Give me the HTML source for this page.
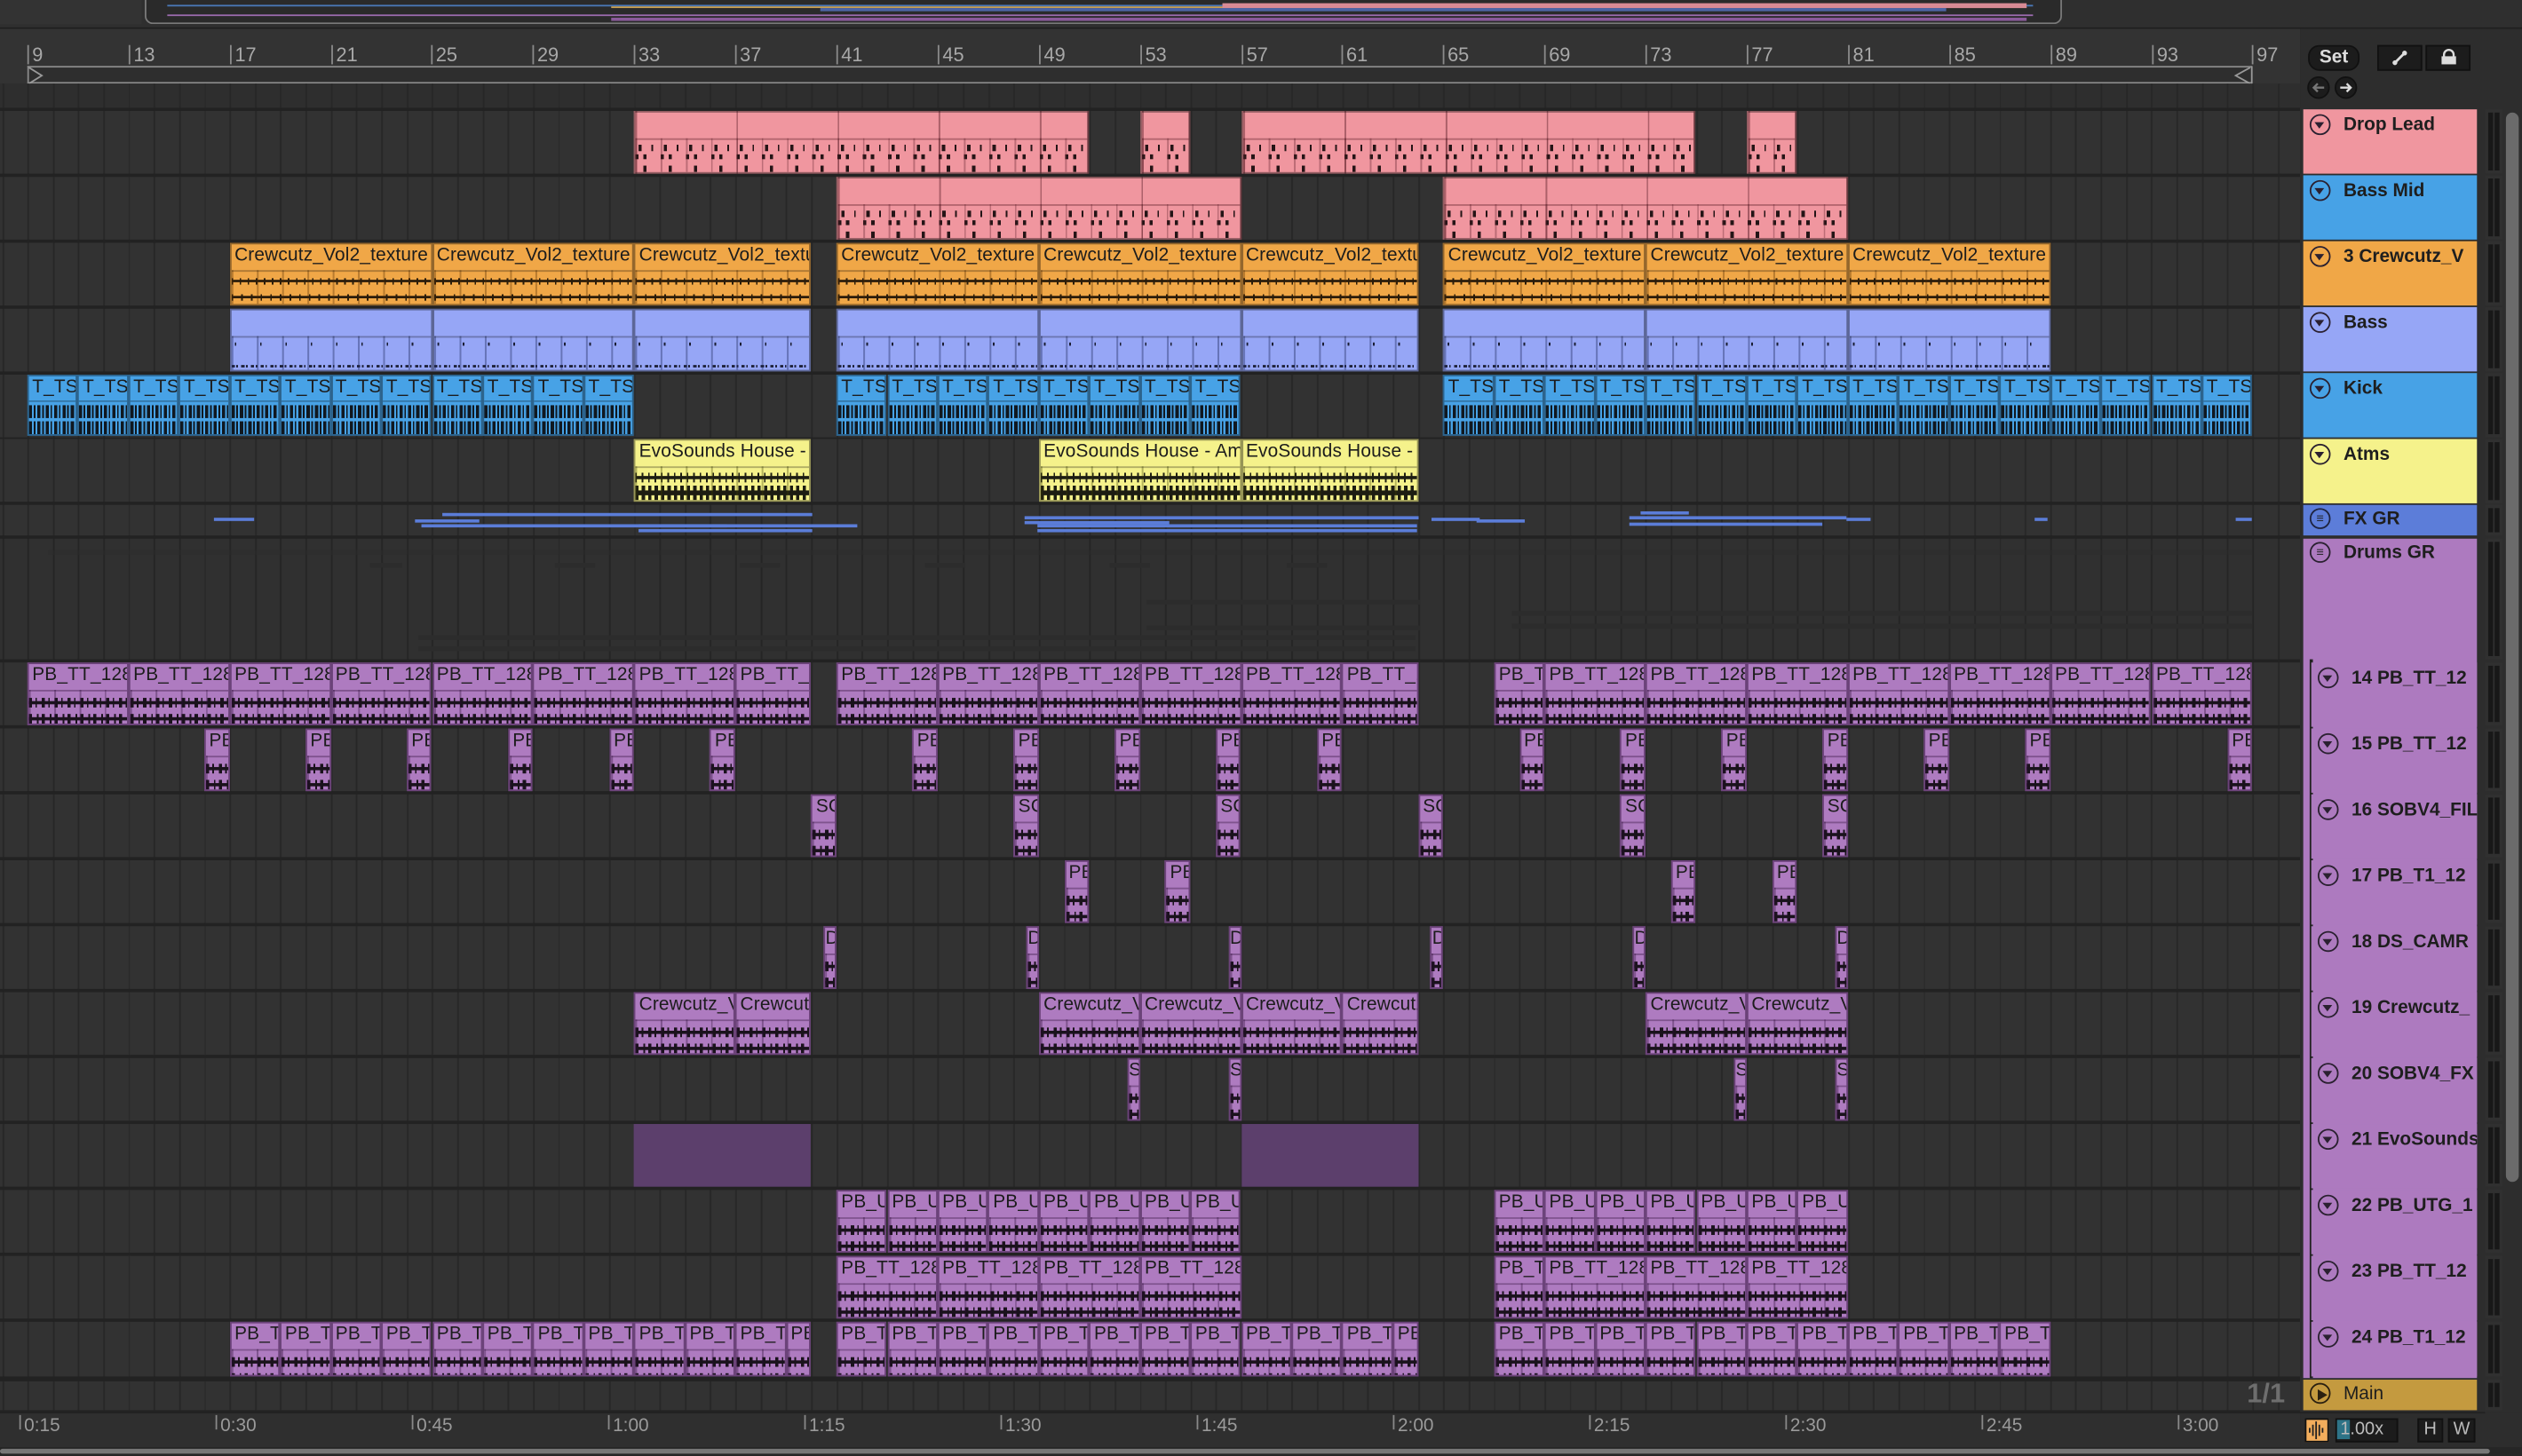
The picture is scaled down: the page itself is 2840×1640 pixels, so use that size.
<!DOCTYPE html>
<html><head><meta charset="utf-8"><style>
html,body{margin:0;padding:0;width:2840px;height:1640px;overflow:hidden;background:#2b2b2b}
.w{position:absolute;left:0;top:0;width:1568px;height:905.5px;transform:scale(1.81122);transform-origin:0 0;background:#2d2d2d;font-family:"Liberation Sans",sans-serif;overflow:hidden}
.a{position:absolute}
.lanes{position:absolute;left:0;top:52px;width:1430px;height:825px;background-color:#323232;background-image:repeating-linear-gradient(90deg,#272727 0 1px,transparent 1px 15.72px);background-position:17px 0}
.sep{position:absolute;left:0;width:1545px;height:1.6px;background:#222}
.c{position:absolute;height:39px;box-sizing:border-box;border:1px solid rgba(0,0,0,.38);overflow:hidden;font-size:11.5px;line-height:15px;padding-left:2px;white-space:nowrap;color:#1c1c1c;letter-spacing:.1px}
.c::after{content:"";position:absolute;left:0;right:0;top:16px;bottom:0;border-top:1px solid rgba(0,0,0,.28)}
.pk{background:#f0969f repeating-linear-gradient(90deg,rgba(90,30,40,.45) 0 1px,transparent 1px 62.88px)}
.pk::after{border-top-color:rgba(90,30,40,.4);background:
repeating-linear-gradient(90deg,rgba(90,30,40,.35) 0 1px,transparent 1px 15.72px),
repeating-linear-gradient(90deg,#241416 0 2px,transparent 2px 8px,#241416 8px 9px,transparent 9px 15.72px) 2px 3px/100% 4px no-repeat,
repeating-linear-gradient(90deg,#241416 0 2px,transparent 2px 5px,#241416 5px 7px,transparent 7px 15.72px) 0 9px/100% 3px no-repeat,
repeating-linear-gradient(90deg,transparent 0 5px,#241416 5px 7px,transparent 7px 15.72px) 0 16px/100% 4px no-repeat}
.or{background:#f0a747}
.or::after{background:repeating-linear-gradient(90deg,rgba(80,40,0,.35) 0 1px,transparent 1px 15.72px),
linear-gradient(#2a1c0a,#2a1c0a) 0 5px/100% 1.5px no-repeat,linear-gradient(#2a1c0a,#2a1c0a) 0 15px/100% 1.5px no-repeat,
repeating-linear-gradient(90deg,#2a1c0a 0 1px,transparent 1px 5px) 0 4px/100% 4px no-repeat,repeating-linear-gradient(90deg,#2a1c0a 0 1px,transparent 1px 6px) 0 14px/100% 4px no-repeat}
.lv{background:#96a6f6}
.lv::after{background:repeating-linear-gradient(90deg,rgba(30,40,90,.4) 0 1px,transparent 1px 15.72px),
repeating-linear-gradient(90deg,#1a1d33 0 1px,transparent 1px 15.72px) 2px 3px/100% 2px no-repeat,
repeating-linear-gradient(90deg,#1a1d33 0 2px,transparent 2px 3px,#1a1d33 3px 4px,transparent 4px 6px) 0 17px/100% 1.5px no-repeat}
.bl{background:#47a2e6;height:38px}
.bl::after{top:15px;background:repeating-linear-gradient(90deg,#101820 0 2px,transparent 2px 3px,#101820 3px 4px,transparent 4px 5.2px) 0 2px/100% 8px no-repeat,
repeating-linear-gradient(90deg,#101820 0 2px,transparent 2px 3px,#101820 3px 4px,transparent 4px 5.2px) 0 12px/100% 8px no-repeat}
.ye{background:#f5f28b}
.ye::after{background:repeating-linear-gradient(90deg,rgba(60,60,0,.35) 0 1px,transparent 1px 15.72px),
linear-gradient(#1d1d12,#1d1d12) 0 5px/100% 2px no-repeat,repeating-linear-gradient(90deg,#1d1d12 0 1px,transparent 1px 4px) 0 3px/100% 6px no-repeat,
linear-gradient(#1d1d12,#1d1d12) 0 14px/100% 3px no-repeat,repeating-linear-gradient(90deg,#1d1d12 0 2px,transparent 2px 4px) 0 11px/100% 9px no-repeat}
.pu{background:#ae7bc0;border-color:rgba(40,10,50,.5)}
.pu::after{border-top-color:rgba(40,10,50,.35);background:repeating-linear-gradient(90deg,rgba(40,10,50,.35) 0 1px,transparent 1px 15.72px),
linear-gradient(#1a121c,#1a121c) 0 6px/100% 2px no-repeat,repeating-linear-gradient(90deg,#1a121c 0 2px,transparent 2px 4px,#1a121c 4px 5px,transparent 5px 8px) 0 4px/100% 6px no-repeat,
linear-gradient(#1a121c,#1a121c) 0 16px/100% 2px no-repeat,repeating-linear-gradient(90deg,#1a121c 0 2px,transparent 2px 5px,#1a121c 5px 6px,transparent 6px 8px) 0 14px/100% 6px no-repeat}
.dk{background:#5c3f6c;border:none}
.dk::after{display:none}
.r1{top:69px}.r2{top:110px}.r3{top:151px}.r4{top:192px}.r5{top:233px}.r6{top:273px}
.t14{top:412px}.t15{top:453px}.t16{top:494px}.t17{top:535px}.t18{top:576px}.t19{top:617px}.t20{top:658px}.t21{top:699px}.t22{top:740px}.t23{top:781px}.t24{top:822px;height:34px}
.s1{width:15.7px}.s0{width:7.9px}.s2{width:31.4px}.s4{width:62.9px}.s8{width:125.8px}
.h{position:absolute;left:1432px;width:108px;height:40px;font-size:11.5px;font-weight:bold;color:#1e1e1e;box-sizing:border-box;padding:4px 0 0 25px;line-height:13px;white-space:nowrap;overflow:hidden}
.h.sub{left:1437px;width:103px;padding-left:25px}
.h i{position:absolute;left:4px;top:2.5px;width:11px;height:11px;border:1.4px solid #2a2030;border-radius:50%}
.h i::after{content:"";position:absolute;left:2.3px;top:4px;border-left:3.3px solid transparent;border-right:3.3px solid transparent;border-top:4.3px solid #2a2030}
.m{position:absolute;left:1545px;width:11px;background:#303030}
.m::before,.m::after{content:"";position:absolute;top:2px;bottom:2px;width:3px;background:#181818}
.m::before{left:2px}.m::after{left:6px}
.bn{position:absolute;top:28px;font-size:12px;color:#a8a8a8;border-left:1px solid #8a8a8a;padding-left:2px;height:12px;line-height:13px}
.tl{position:absolute;top:880px;font-size:11.5px;color:#9a9a9a;border-left:1px solid #888;padding-left:2px;height:9px;line-height:14px}
.fx{position:absolute;height:2px;background:#5b7dd8}
.dg{position:absolute;height:3px;background:#2c2c2c}
</style></head><body><div class="w">

<div class="a" style="left:0;top:0;width:1568px;height:17px;background:#2f2f2f;border-bottom:1px solid #1f1f1f"></div>
<div class="a" style="left:0;top:0;width:88px;height:15px;background:#333"></div>
<div class="a" style="left:90px;top:0;width:1190px;height:14px;border:1.5px solid #7a7a7a;border-top:none;border-radius:0 0 5px 5px;background:#2a2a2a"></div>
<div class="a" style="left:104px;top:3px;width:1160px;height:1px;background:#4a78b8"></div>
<div class="a" style="left:380px;top:4px;width:880px;height:1px;background:#c9a050"></div>
<div class="a" style="left:104px;top:9px;width:1160px;height:1px;background:#9a6aac"></div>
<div class="a" style="left:380px;top:11px;width:880px;height:2px;background:#8a5a9a"></div>
<div class="a" style="left:760px;top:2px;width:500px;height:3px;background:#d88a94"></div>
<div class="a" style="left:510px;top:5px;width:700px;height:2px;background:#5b7dd8;opacity:.7"></div>

<div class="a" style="left:0;top:18px;width:1430px;height:34px;background:#333"></div>
<div class="bn" style="left:17px">9</div><div class="bn" style="left:80px">13</div><div class="bn" style="left:143px">17</div><div class="bn" style="left:206px">21</div><div class="bn" style="left:268px">25</div><div class="bn" style="left:331px">29</div><div class="bn" style="left:394px">33</div><div class="bn" style="left:457px">37</div><div class="bn" style="left:520px">41</div><div class="bn" style="left:583px">45</div><div class="bn" style="left:646px">49</div><div class="bn" style="left:709px">53</div><div class="bn" style="left:772px">57</div><div class="bn" style="left:834px">61</div><div class="bn" style="left:897px">65</div><div class="bn" style="left:960px">69</div><div class="bn" style="left:1023px">73</div><div class="bn" style="left:1086px">77</div><div class="bn" style="left:1149px">81</div><div class="bn" style="left:1212px">85</div><div class="bn" style="left:1275px">89</div><div class="bn" style="left:1338px">93</div><div class="bn" style="left:1400px">97</div>
<div class="a" style="left:17px;top:41px;width:1383px;height:9px;border-top:1.5px solid #8a8a8a;border-bottom:1.5px solid #8a8a8a;background:#2e2e2e"></div>
<div class="a" style="left:17px;top:41px;width:1px;height:12px;background:#8a8a8a"></div>
<svg class="a" style="left:17px;top:41px" width="12" height="12"><path d="M1 1 L9 6 L1 11" fill="none" stroke="#999" stroke-width="1"/></svg>
<svg class="a" style="left:1388px;top:41px" width="13" height="12"><path d="M11 1 L2 6 L11 11" fill="none" stroke="#999" stroke-width="1"/><path d="M12 0V12" stroke="#999"/></svg>

<div class="lanes"></div>
<div class="a" style="left:0;top:52px;width:1430px;height:15px;background:rgba(40,40,40,.3)"></div>
<div class="a" style="left:0;top:335px;width:1430px;height:75px;background:rgba(20,20,20,.08)"></div>
<div class="dg" style="left:30px;top:342px;width:1370px;opacity:.5"></div>
<div class="dg" style="left:230px;top:350px;width:20px"></div><div class="dg" style="left:345px;top:350px;width:25px"></div><div class="dg" style="left:460px;top:350px;width:25px"></div><div class="dg" style="left:575px;top:350px;width:25px"></div><div class="dg" style="left:690px;top:350px;width:25px"></div><div class="dg" style="left:800px;top:350px;width:25px"></div>
<div class="dg" style="left:713px;top:373px;width:170px"></div><div class="dg" style="left:713px;top:389px;width:170px"></div>
<div class="dg" style="left:260px;top:395px;width:620px"></div><div class="dg" style="left:260px;top:402px;width:620px"></div>
<div class="dg" style="left:940px;top:380px;width:460px"></div><div class="dg" style="left:940px;top:388px;width:460px"></div>

<div class="sep" style="top:67px"></div><div class="sep" style="top:108px"></div><div class="sep" style="top:149px"></div><div class="sep" style="top:190px"></div><div class="sep" style="top:231px"></div><div class="sep" style="top:271.5px"></div><div class="sep" style="top:312px"></div><div class="sep" style="top:333px"></div><div class="sep" style="top:410px"></div><div class="sep" style="top:451px"></div><div class="sep" style="top:492px"></div><div class="sep" style="top:533px"></div><div class="sep" style="top:574px"></div><div class="sep" style="top:615px"></div><div class="sep" style="top:656px"></div><div class="sep" style="top:697px"></div><div class="sep" style="top:738px"></div><div class="sep" style="top:779px"></div><div class="sep" style="top:820px"></div><div class="sep" style="top:856px;height:2.5px"></div><div class="sep" style="top:877px;height:2px"></div>

<div class="c pk r1" style="left:394.3px;width:282.9px"></div><div class="c pk r1" style="left:708.7px;width:31.4px"></div><div class="c pk r1" style="left:771.6px;width:282.9px"></div><div class="c pk r1" style="left:1086px;width:31.4px"></div>
<div class="c pk r2" style="left:520px;width:251.6px"></div><div class="c pk r2" style="left:897.3px;width:251.5px"></div>
<div class="c or r3 s8" style="left:142.8px">Crewcutz_Vol2_texture</div><div class="c or r3 s8" style="left:268.5px">Crewcutz_Vol2_texture</div><div class="c or r3" style="left:394.3px;width:110px">Crewcutz_Vol2_texture</div><div class="c or r3 s8" style="left:520px">Crewcutz_Vol2_texture</div><div class="c or r3 s8" style="left:645.8px">Crewcutz_Vol2_texture</div><div class="c or r3" style="left:771.6px;width:110px">Crewcutz_Vol2_texture</div><div class="c or r3 s8" style="left:897.3px">Crewcutz_Vol2_texture</div><div class="c or r3 s8" style="left:1023.1px">Crewcutz_Vol2_texture</div><div class="c or r3 s8" style="left:1148.8px">Crewcutz_Vol2_texture</div>
<div class="c lv r4 s8" style="left:142.8px"></div><div class="c lv r4 s8" style="left:268.5px"></div><div class="c lv r4" style="left:394.3px;width:110px"></div><div class="c lv r4 s8" style="left:520px"></div><div class="c lv r4 s8" style="left:645.8px"></div><div class="c lv r4" style="left:771.6px;width:110px"></div><div class="c lv r4 s8" style="left:897.3px"></div><div class="c lv r4 s8" style="left:1023.1px"></div><div class="c lv r4 s8" style="left:1148.8px"></div>
<div class="c bl r5 s2" style="left:17px">T_TS</div><div class="c bl r5 s2" style="left:48.4px">T_TS</div><div class="c bl r5 s2" style="left:79.9px">T_TS</div><div class="c bl r5 s2" style="left:111.3px">T_TS</div><div class="c bl r5 s2" style="left:142.8px">T_TS</div><div class="c bl r5 s2" style="left:174.2px">T_TS</div><div class="c bl r5 s2" style="left:205.6px">T_TS</div><div class="c bl r5 s2" style="left:237.1px">T_TS</div><div class="c bl r5 s2" style="left:268.5px">T_TS</div><div class="c bl r5 s2" style="left:300px">T_TS</div><div class="c bl r5 s2" style="left:331.4px">T_TS</div><div class="c bl r5 s2" style="left:362.8px">T_TS</div>
<div class="c bl r5 s2" style="left:520px">T_TS</div><div class="c bl r5 s2" style="left:551.5px">T_TS</div><div class="c bl r5 s2" style="left:582.9px">T_TS</div><div class="c bl r5 s2" style="left:614.4px">T_TS</div><div class="c bl r5 s2" style="left:645.8px">T_TS</div><div class="c bl r5 s2" style="left:677.2px">T_TS</div><div class="c bl r5 s2" style="left:708.7px">T_TS</div><div class="c bl r5 s2" style="left:740.1px">T_TS</div>
<div class="c bl r5 s2" style="left:897.3px">T_TS</div><div class="c bl r5 s2" style="left:928.8px">T_TS</div><div class="c bl r5 s2" style="left:960.2px">T_TS</div><div class="c bl r5 s2" style="left:991.6px">T_TS</div><div class="c bl r5 s2" style="left:1023.1px">T_TS</div><div class="c bl r5 s2" style="left:1054.5px">T_TS</div><div class="c bl r5 s2" style="left:1086px">T_TS</div><div class="c bl r5 s2" style="left:1117.4px">T_TS</div><div class="c bl r5 s2" style="left:1148.8px">T_TS</div><div class="c bl r5 s2" style="left:1180.3px">T_TS</div><div class="c bl r5 s2" style="left:1211.7px">T_TS</div><div class="c bl r5 s2" style="left:1243.2px">T_TS</div><div class="c bl r5 s2" style="left:1274.6px">T_TS</div><div class="c bl r5 s2" style="left:1306px">T_TS</div><div class="c bl r5 s2" style="left:1337.5px">T_TS</div><div class="c bl r5 s2" style="left:1368.9px">T_TS</div>
<div class="c ye r6" style="left:394.3px;width:110px">EvoSounds House - Ambient</div><div class="c ye r6 s8" style="left:645.8px">EvoSounds House - Ambient</div><div class="c ye r6" style="left:771.6px;width:110px">EvoSounds House - Ambient</div>
<div class="fx" style="left:133px;top:322px;width:25px"></div><div class="fx" style="left:258px;top:323px;width:40px"></div><div class="fx" style="left:275px;top:319px;width:230px"></div><div class="fx" style="left:262px;top:326px;width:190px"></div><div class="fx" style="left:397px;top:326px;width:136px"></div><div class="fx" style="left:397px;top:329px;width:108px"></div><div class="fx" style="left:637px;top:321px;width:245px"></div><div class="fx" style="left:637px;top:324px;width:90px"></div><div class="fx" style="left:645px;top:326px;width:236px"></div><div class="fx" style="left:645px;top:329px;width:236px"></div><div class="fx" style="left:890px;top:322px;width:30px"></div><div class="fx" style="left:918px;top:323px;width:30px"></div><div class="fx" style="left:1013px;top:321px;width:135px"></div><div class="fx" style="left:1020px;top:318px;width:30px"></div><div class="fx" style="left:1013px;top:325px;width:120px"></div><div class="fx" style="left:1148px;top:322px;width:15px"></div><div class="fx" style="left:1265px;top:322px;width:8px"></div><div class="fx" style="left:1390px;top:322px;width:10px"></div>

<div class="c pu t14 s4" style="left:17px">PB_TT_128</div><div class="c pu t14 s4" style="left:79.9px">PB_TT_128</div><div class="c pu t14 s4" style="left:142.8px">PB_TT_128</div><div class="c pu t14 s4" style="left:205.6px">PB_TT_128</div><div class="c pu t14 s4" style="left:268.5px">PB_TT_128</div><div class="c pu t14 s4" style="left:331.4px">PB_TT_128</div><div class="c pu t14 s4" style="left:394.3px">PB_TT_128</div><div class="c pu t14" style="left:457.2px;width:47.1px">PB_TT_128</div>
<div class="c pu t14 s4" style="left:520px">PB_TT_128</div><div class="c pu t14 s4" style="left:582.9px">PB_TT_128</div><div class="c pu t14 s4" style="left:645.8px">PB_TT_128</div><div class="c pu t14 s4" style="left:708.7px">PB_TT_128</div><div class="c pu t14 s4" style="left:771.6px">PB_TT_128</div><div class="c pu t14" style="left:834.4px;width:47.2px">PB_TT_128</div>
<div class="c pu t14 s2" style="left:928.8px">PB_TT_128</div><div class="c pu t14 s4" style="left:960.2px">PB_TT_128</div><div class="c pu t14 s4" style="left:1023.1px">PB_TT_128</div><div class="c pu t14 s4" style="left:1086px">PB_TT_128</div><div class="c pu t14 s4" style="left:1148.8px">PB_TT_128</div><div class="c pu t14 s4" style="left:1211.7px">PB_TT_128</div><div class="c pu t14 s4" style="left:1274.6px">PB_TT_128</div><div class="c pu t14 s4" style="left:1337.5px">PB_TT_128</div>
<div class="c pu t15 s1" style="left:127px">PB</div><div class="c pu t15 s1" style="left:189.9px">PB</div><div class="c pu t15 s1" style="left:252.8px">PB</div><div class="c pu t15 s1" style="left:315.7px">PB</div><div class="c pu t15 s1" style="left:378.6px">PB</div><div class="c pu t15 s1" style="left:441.4px">PB</div><div class="c pu t15 s1" style="left:567.2px">PB</div><div class="c pu t15 s1" style="left:630.1px">PB</div><div class="c pu t15 s1" style="left:693px">PB</div><div class="c pu t15 s1" style="left:755.8px">PB</div><div class="c pu t15 s1" style="left:818.7px">PB</div><div class="c pu t15 s1" style="left:944.5px">PB</div><div class="c pu t15 s1" style="left:1007.4px">PB</div><div class="c pu t15 s1" style="left:1070.2px">PB</div><div class="c pu t15 s1" style="left:1133.1px">PB</div><div class="c pu t15 s1" style="left:1196px">PB</div><div class="c pu t15 s1" style="left:1258.9px">PB</div><div class="c pu t15 s1" style="left:1384.6px">PB</div>
<div class="c pu t16 s1" style="left:504.3px">SC</div><div class="c pu t16 s1" style="left:630.1px">SC</div><div class="c pu t16 s1" style="left:755.8px">SC</div><div class="c pu t16 s1" style="left:881.6px">SC</div><div class="c pu t16 s1" style="left:1007.4px">SC</div><div class="c pu t16 s1" style="left:1133.1px">SC</div>
<div class="c pu t17 s1" style="left:661.5px">PB</div><div class="c pu t17 s1" style="left:724.4px">PB</div><div class="c pu t17 s1" style="left:1038.8px">PB</div><div class="c pu t17 s1" style="left:1101.7px">PB</div>
<div class="c pu t18 s0" style="left:512.2px;padding:0">D</div><div class="c pu t18 s0" style="left:638px;padding:0">D</div><div class="c pu t18 s0" style="left:763.7px;padding:0">D</div><div class="c pu t18 s0" style="left:889.4px;padding:0">D</div><div class="c pu t18 s0" style="left:1015.2px;padding:0">D</div><div class="c pu t18 s0" style="left:1141px;padding:0">D</div>
<div class="c pu t19 s4" style="left:394.3px">Crewcutz_Vol2</div><div class="c pu t19" style="left:457.2px;width:47.1px">Crewcutz_Vol2</div><div class="c pu t19 s4" style="left:645.8px">Crewcutz_Vol2</div><div class="c pu t19 s4" style="left:708.7px">Crewcutz_Vol2</div><div class="c pu t19 s4" style="left:771.6px">Crewcutz_Vol2</div><div class="c pu t19" style="left:834.4px;width:47.2px">Crewcutz_Vol2</div><div class="c pu t19 s4" style="left:1023.1px">Crewcutz_Vol2</div><div class="c pu t19 s4" style="left:1086px">Crewcutz_Vol2</div>
<div class="c pu t20 s0" style="left:700.8px;padding:0">S</div><div class="c pu t20 s0" style="left:763.7px;padding:0">S</div><div class="c pu t20 s0" style="left:1078.1px;padding:0">S</div><div class="c pu t20 s0" style="left:1141px;padding:0">S</div>
<div class="c dk t21" style="left:394.3px;width:110px"></div><div class="c dk t21" style="left:771.6px;width:110px"></div>
<div class="c pu t22 s2" style="left:520px">PB_UTG</div><div class="c pu t22 s2" style="left:551.5px">PB_UTG</div><div class="c pu t22 s2" style="left:582.9px">PB_UTG</div><div class="c pu t22 s2" style="left:614.4px">PB_UTG</div><div class="c pu t22 s2" style="left:645.8px">PB_UTG</div><div class="c pu t22 s2" style="left:677.2px">PB_UTG</div><div class="c pu t22 s2" style="left:708.7px">PB_UTG</div><div class="c pu t22 s2" style="left:740.1px">PB_UTG</div>
<div class="c pu t22 s2" style="left:928.8px">PB_UTG</div><div class="c pu t22 s2" style="left:960.2px">PB_UTG</div><div class="c pu t22 s2" style="left:991.6px">PB_UTG</div><div class="c pu t22 s2" style="left:1023.1px">PB_UTG</div><div class="c pu t22 s2" style="left:1054.5px">PB_UTG</div><div class="c pu t22 s2" style="left:1086px">PB_UTG</div><div class="c pu t22 s2" style="left:1117.4px">PB_UTG</div>
<div class="c pu t23 s4" style="left:520px">PB_TT_128</div><div class="c pu t23 s4" style="left:582.9px">PB_TT_128</div><div class="c pu t23 s4" style="left:645.8px">PB_TT_128</div><div class="c pu t23 s4" style="left:708.7px">PB_TT_128</div>
<div class="c pu t23 s2" style="left:928.8px">PB_TT_128</div><div class="c pu t23 s4" style="left:960.2px">PB_TT_128</div><div class="c pu t23 s4" style="left:1023.1px">PB_TT_128</div><div class="c pu t23 s4" style="left:1086px">PB_TT_128</div>
<div class="c pu t24 s2" style="left:142.8px">PB_T1_128</div><div class="c pu t24 s2" style="left:174.2px">PB_T1_128</div><div class="c pu t24 s2" style="left:205.6px">PB_T1_128</div><div class="c pu t24 s2" style="left:237.1px">PB_T1_128</div><div class="c pu t24 s2" style="left:268.5px">PB_T1_128</div><div class="c pu t24 s2" style="left:300px">PB_T1_128</div><div class="c pu t24 s2" style="left:331.4px">PB_T1_128</div><div class="c pu t24 s2" style="left:362.8px">PB_T1_128</div><div class="c pu t24 s2" style="left:394.3px">PB_T1_128</div><div class="c pu t24 s2" style="left:425.7px">PB_T1_128</div><div class="c pu t24 s2" style="left:457.2px">PB_T1_128</div><div class="c pu t24 s1" style="left:488.6px">PB_T1_128</div>
<div class="c pu t24 s2" style="left:520px">PB_T1_128</div><div class="c pu t24 s2" style="left:551.5px">PB_T1_128</div><div class="c pu t24 s2" style="left:582.9px">PB_T1_128</div><div class="c pu t24 s2" style="left:614.4px">PB_T1_128</div><div class="c pu t24 s2" style="left:645.8px">PB_T1_128</div><div class="c pu t24 s2" style="left:677.2px">PB_T1_128</div><div class="c pu t24 s2" style="left:708.7px">PB_T1_128</div><div class="c pu t24 s2" style="left:740.1px">PB_T1_128</div><div class="c pu t24 s2" style="left:771.6px">PB_T1_128</div><div class="c pu t24 s2" style="left:803px">PB_T1_128</div><div class="c pu t24 s2" style="left:834.4px">PB_T1_128</div><div class="c pu t24 s1" style="left:865.9px">PB_T1_128</div>
<div class="c pu t24 s2" style="left:928.8px">PB_T1_128</div><div class="c pu t24 s2" style="left:960.2px">PB_T1_128</div><div class="c pu t24 s2" style="left:991.6px">PB_T1_128</div><div class="c pu t24 s2" style="left:1023.1px">PB_T1_128</div><div class="c pu t24 s2" style="left:1054.5px">PB_T1_128</div><div class="c pu t24 s2" style="left:1086px">PB_T1_128</div><div class="c pu t24 s2" style="left:1117.4px">PB_T1_128</div><div class="c pu t24 s2" style="left:1148.8px">PB_T1_128</div><div class="c pu t24 s2" style="left:1180.3px">PB_T1_128</div><div class="c pu t24 s2" style="left:1211.7px">PB_T1_128</div><div class="c pu t24 s2" style="left:1243.2px">PB_T1_128</div>

<div class="a" style="left:1430px;top:18px;width:138px;height:860px;background:#2d2d2d"></div>
<div class="a" style="left:1435px;top:28px;width:30px;height:14px;border-radius:7px;background:#1c1c1c;border:1px solid #111;color:#ddd;font-size:11.5px;font-weight:bold;text-align:center;line-height:14px">Set</div>
<div class="a" style="left:1478px;top:28px;width:26px;height:14px;background:#1c1c1c;border:1px solid #111"><svg width="26" height="14"><path d="M10 10 L16 4" stroke="#ddd" stroke-width="1.5"/><circle cx="10" cy="10" r="1.5" fill="#ddd"/><circle cx="16" cy="4" r="1.5" fill="#ddd"/></svg></div>
<div class="a" style="left:1508px;top:28px;width:26px;height:14px;background:#1c1c1c;border:1px solid #111"><svg width="26" height="14"><rect x="9" y="6" width="9" height="5" fill="#ddd"/><path d="M10.5 6.5V5a3 3 0 0 1 6 0v1.5" fill="none" stroke="#ddd" stroke-width="1.3"/></svg></div>
<svg class="a" style="left:1434px;top:47px" width="34" height="16"><circle cx="7.5" cy="7.5" r="6.5" fill="#1c1c1c" stroke="#111"/><path d="M11 7.5H4.5M7 5L4.5 7.5L7 10" stroke="#777" stroke-width="1.3" fill="none"/><circle cx="24.5" cy="7.5" r="6.5" fill="#1c1c1c" stroke="#111"/><path d="M21 7.5H27.5M25 5L27.5 7.5L25 10" stroke="#ddd" stroke-width="1.3" fill="none"/></svg>

<div class="h" style="top:68px;background:#f0969f"><i></i>Drop Lead</div>
<div class="h" style="top:109px;background:#47a2e6"><i></i>Bass Mid</div>
<div class="h" style="top:150px;background:#f0a747"><i></i>3 Crewcutz_V</div>
<div class="h" style="top:191px;background:#96a6f6"><i></i>Bass</div>
<div class="h" style="top:232px;background:#47a2e6"><i></i>Kick</div>
<div class="h" style="top:273px;background:#f5f28b"><i></i>Atms</div>
<div class="h" style="top:314px;height:19px;background:#5c7dd9;padding-top:3px"><span style="position:absolute;left:4px;top:2px;width:11px;height:11px;border:1.4px solid #1e2440;border-radius:50%;font-size:8px;line-height:11px;text-align:center">≡</span>FX GR</div>
<div class="h" style="top:335px;height:522px;background:#ad7abf;padding-top:3px"><span style="position:absolute;left:4px;top:2px;width:11px;height:11px;border:1.4px solid #2a2030;border-radius:50%;font-size:8px;line-height:11px;text-align:center">≡</span>Drums GR</div>
<div class="a" style="left:1436px;top:410px;width:2px;height:447px;background:#222"></div>
<div class="h sub" style="top:412px;background:#ad7abf"><i></i>14 PB_TT_12</div>
<div class="h sub" style="top:453px;background:#ad7abf"><i></i>15 PB_TT_12</div>
<div class="h sub" style="top:494px;background:#ad7abf"><i></i>16 SOBV4_FIL</div>
<div class="h sub" style="top:535px;background:#ad7abf"><i></i>17 PB_T1_12</div>
<div class="h sub" style="top:576px;background:#ad7abf"><i></i>18 DS_CAMR</div>
<div class="h sub" style="top:617px;background:#ad7abf"><i></i>19 Crewcutz_</div>
<div class="h sub" style="top:658px;background:#ad7abf"><i></i>20 SOBV4_FX</div>
<div class="h sub" style="top:699px;background:#ad7abf"><i></i>21 EvoSounds</div>
<div class="h sub" style="top:740px;background:#ad7abf"><i></i>22 PB_UTG_1</div>
<div class="h sub" style="top:781px;background:#ad7abf"><i></i>23 PB_TT_12</div>
<div class="h sub" style="top:822px;height:34px;background:#ad7abf"><i></i>24 PB_T1_12</div>
<div class="h" style="top:858px;height:19px;background:#c49a3f;padding:3px 0 0 25px;font-weight:normal;font-size:11.5px"><span style="position:absolute;left:4px;top:2px;width:11px;height:11px;border:1.4px solid #2a2010;border-radius:50%"></span><svg style="position:absolute;left:8.5px;top:5.5px" width="6" height="7"><path d="M0 0L6 3.5L0 7Z" fill="#2a2010"/></svg>Main</div>
<div class="a" style="left:1397px;top:857px;font-size:17px;font-weight:bold;color:#6e6e6e">1/1</div>

<div class="m" style="top:68px;height:40px"></div><div class="m" style="top:109px;height:40px"></div><div class="m" style="top:150px;height:40px"></div><div class="m" style="top:191px;height:40px"></div><div class="m" style="top:232px;height:40px"></div><div class="m" style="top:273px;height:40px"></div><div class="m" style="top:314px;height:19px"></div><div class="m" style="top:335px;height:75px"></div><div class="m" style="top:412px;height:39px"></div><div class="m" style="top:453px;height:39px"></div><div class="m" style="top:494px;height:39px"></div><div class="m" style="top:535px;height:39px"></div><div class="m" style="top:576px;height:39px"></div><div class="m" style="top:617px;height:39px"></div><div class="m" style="top:658px;height:39px"></div><div class="m" style="top:699px;height:39px"></div><div class="m" style="top:740px;height:39px"></div><div class="m" style="top:781px;height:39px"></div><div class="m" style="top:822px;height:34px"></div><div class="m" style="top:858px;height:19px"></div>
<div class="a" style="left:1558px;top:70px;width:8px;height:665px;border-radius:4px;background:#6b6b6b"></div>

<div class="a" style="left:0;top:879px;width:1430px;height:21px;background:#2f2f2f"></div>
<div class="tl" style="left:12px">0:15</div><div class="tl" style="left:134px">0:30</div><div class="tl" style="left:256px">0:45</div><div class="tl" style="left:378px">1:00</div><div class="tl" style="left:500px">1:15</div><div class="tl" style="left:622px">1:30</div><div class="tl" style="left:744px">1:45</div><div class="tl" style="left:866px">2:00</div><div class="tl" style="left:988px">2:15</div><div class="tl" style="left:1110px">2:30</div><div class="tl" style="left:1232px">2:45</div><div class="tl" style="left:1354px">3:00</div>
<div class="a" style="left:1433px;top:882px;width:13px;height:13px;background:#f2ad5c;border:1px solid #111"><svg width="13" height="13"><path d="M2 5v3M4 3v7M6 1v11M8 3v7M10 5v3" stroke="#222" stroke-width="1"/></svg></div>
<div class="a" style="left:1452px;top:882px;width:37px;height:13px;background:#1c1c1c;border:1px solid #111;font-size:11px;color:#bbb;line-height:13px"><span style="background:#2d7387;padding:0 0 0 2px">1</span>.00x</div>
<div class="a" style="left:1503px;top:882px;width:14px;height:13px;background:#1c1c1c;border:1px solid #111;font-size:11px;color:#bbb;line-height:13px;text-align:center">H</div>
<div class="a" style="left:1522px;top:882px;width:15px;height:13px;background:#1c1c1c;border:1px solid #111;font-size:11px;color:#bbb;line-height:13px;text-align:center">W</div>
<div class="a" style="left:0;top:900px;width:1568px;height:6px;background:#262626"></div>
<div class="a" style="left:0;top:901px;width:1548px;height:3px;background:#777;border-radius:2px"></div>
</div></body></html>
